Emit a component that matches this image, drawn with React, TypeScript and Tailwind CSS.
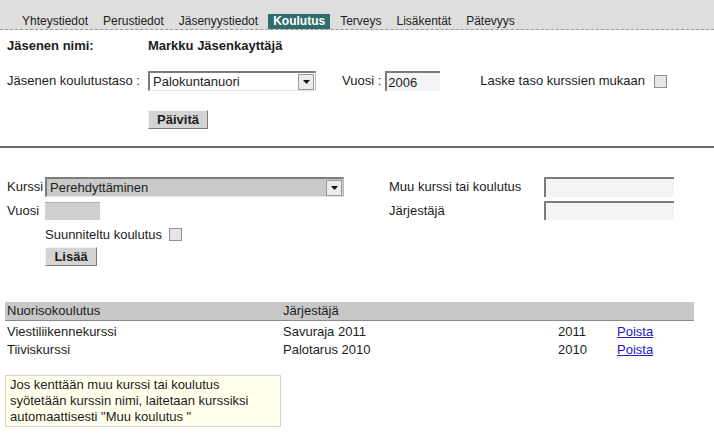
import React from "react";

function Arrow() {
  return (
    <div className="ml-auto mr-[1px] flex h-[16px] w-[16px] items-center justify-center border border-[#9a9a9a] bg-[#ececec]">
      <svg width="7" height="4" viewBox="0 0 7 4">
        <path d="M0 0 L7 0 L3.5 4 Z" fill="#111" />
      </svg>
    </div>
  );
}

function Select({ w, bg, text }: { w: string; bg: string; text: string }) {
  return (
    <div
      className={`flex h-[20px] items-center border-t-2 border-l-2 border-t-[#7c7c7c] border-l-[#7c7c7c] border-r border-b border-r-[#bdbdbd] border-b-[#e4e4e4] ${w} ${bg}`}
    >
      <span className="pl-[3px] leading-[15px]">{text}</span>
      <Arrow />
    </div>
  );
}

function Checkbox() {
  return <div className="h-[13px] w-[13px] border border-[#8f8f8f] bg-[#e6e6e6]" />;
}

function Btn({ children, w }: { children: React.ReactNode; w: string }) {
  return (
    <div
      className={`flex h-[19px] items-center justify-center border border-t-[#f4f4f4] border-l-[#f4f4f4] border-r-[#7a7a7a] border-b-[#7a7a7a] bg-[#d4d4d4] font-bold leading-[15px] ${w}`}
    >
      {children}
    </div>
  );
}

function Input({ w, bg, value, h }: { w: string; bg: string; value?: string; h: string }) {
  return (
    <div className={`flex items-center border-t-2 border-l-2 border-t-[#7c7c7c] border-l-[#7c7c7c] pl-[1px] leading-[15px] ${w} ${h} ${bg}`}>
      {value}
    </div>
  );
}

export default function App() {
  const tabs = ["Yhteystiedot", "Perustiedot", "Jäsenyystiedot", "Koulutus", "Terveys", "Lisäkentät", "Pätevyys"];
  return (
    <div
      className="h-[433px] w-[714px] overflow-hidden bg-white text-[13px] text-[#1c1c1c]"
      style={{ fontFamily: '"Liberation Sans", Arial, sans-serif' }}
    >
      {/* Tab bar */}
      <div className="flex h-[30px] items-end gap-[5px] border-b border-dashed border-[#9a9a9a] bg-[#dedede] pl-[17px]">
        {tabs.map((t) =>
          t === "Koulutus" ? (
            <div key={t} className="mb-0 bg-[#2f6d6b] px-[5px] text-[12px] font-bold leading-[15px] text-white">
              {t}
            </div>
          ) : (
            <div key={t} className="mb-0 px-[5px] text-[12px] leading-[15px] text-[#222]">
              {t}
            </div>
          )
        )}
      </div>

      <div className="pl-[7px]">
        <div className="mt-[8px] flex font-bold leading-[15px]">
          <div className="w-[141px]">Jäsenen nimi:</div>
          <div>Markku Jäsenkayttäjä</div>
        </div>

        <div className="mt-[18px] flex items-center">
          <div className="w-[141px]">Jäsenen koulutustaso :</div>
          <Select w="w-[168px]" bg="bg-white" text="Palokuntanuori" />
          <div className="ml-[26px]">Vuosi :</div>
          <div className="ml-[4px]">
            <Input w="w-[55px]" h="h-[20px]" bg="bg-[#f4f4f4]" value="2006" />
          </div>
          <div className="ml-[40px]">Laske taso kurssien mukaan</div>
          <div className="ml-[9px]">
            <Checkbox />
          </div>
        </div>

        <div className="mt-[19px] pl-[141px]">
          <Btn w="w-[60px]">Päivitä</Btn>
        </div>
      </div>

      <div className="mt-[17px] h-[2px] w-full bg-[#6e6e6e]" />

      <div className="mt-[29px] pl-[7px]">
        <div className="grid grid-cols-[38px_299px_45px_155px_130px] items-center gap-y-[4px]">
          <div>Kurssi</div>
          <Select w="w-[299px]" bg="bg-[#c9c9c9]" text="Perehdyttäminen" />
          <div />
          <div>Muu kurssi tai koulutus</div>
          <Input w="w-[130px]" h="h-[20px]" bg="bg-[#f4f4f4]" />

          <div>Vuosi</div>
          <div className="h-[18px] w-[55px] border-t border-t-[#b0b0b0] bg-[#cfcfcf]" />
          <div />
          <div>Järjestäjä</div>
          <Input w="w-[130px]" h="h-[19px]" bg="bg-[#f4f4f4]" />
        </div>
        <div className="mt-[6px] flex items-center pl-[38px]">
          <div className="leading-[15px]">Suunniteltu koulutus</div>
          <div className="ml-[7px]">
            <Checkbox />
          </div>
        </div>
        <div className="mt-[5px] pl-[38px]">
          <Btn w="w-[52px]">Lisää</Btn>
        </div>
      </div>

      {/* Table */}
      <div className="ml-[5px] mt-[36px] w-[689px]">
        <div className="grid h-[19px] grid-cols-[278px_275px_59px_77px] items-center border-b border-b-[#8a8a8a] bg-[#c8c8c8] leading-[15px]">
          <div className="pl-[2px]">Nuorisokoulutus</div>
          <div>Järjestäjä</div>
          <div />
          <div />
        </div>
        {[
          ["Viestiliikennekurssi", "Savuraja 2011", "2011"],
          ["Tiiviskurssi", "Palotarus 2010", "2010"],
        ].map((r, i) => (
          <div
            key={r[0]}
            className={`grid grid-cols-[278px_275px_59px_77px] items-center leading-[15px] ${i === 0 ? "mt-[2px] h-[18px]" : "h-[18px]"}`}
          >
            <div className="pl-[2px]">{r[0]}</div>
            <div>{r[1]}</div>
            <div>{r[2]}</div>
            <div>
              <a className="text-[#2020c8] underline" href="#">
                Poista
              </a>
            </div>
          </div>
        ))}
      </div>

      <div className="ml-[5px] mt-[16px] w-[276px] border border-[#d2d2c8] bg-[#ffffec] px-[4px] py-[1px] leading-[16px]">
        Jos kenttään muu kurssi tai koulutus syötetään kurssin nimi, laitetaan kurssiksi automaattisesti "Muu koulutus "
      </div>
    </div>
  );
}
